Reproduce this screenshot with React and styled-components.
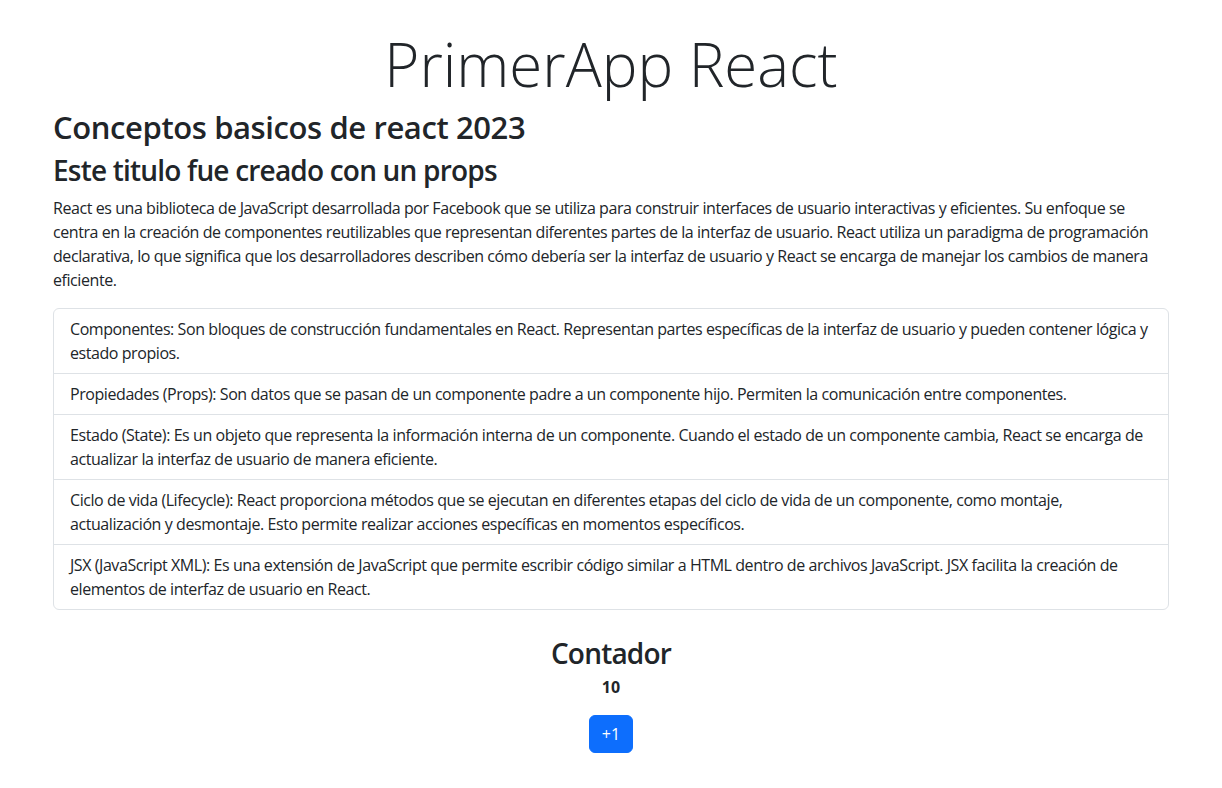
import React, { useState } from "react";
import styled, { createGlobalStyle } from "styled-components";

const GlobalStyle = createGlobalStyle`
  *, *::before, *::after { box-sizing: border-box; }
  body {
    margin: 0;
    background: #fff;
    color: #212529;
    font-family: "Open Sans", "Noto Sans", sans-serif;
    font-size: 16px;
    line-height: 1.5;
    letter-spacing: -0.43px;
  }
`;

const Container = styled.div`
  max-width: 1140px;
  margin: 0 auto;
  padding: 0 12px;
`;

const Display = styled.h1`
  margin: 28px 0 9px;
  text-align: center;
  font-size: 60px;
  font-weight: 300;
  line-height: 1.2;
  letter-spacing: 0;
`;

const Heading = styled.h2`
  margin: 0 0 ${(p) => (p.$tight ? 5 : 8)}px;
  font-size: ${(p) => p.$size}px;
  font-weight: 600;
  line-height: ${(p) => p.$size * 1.2}px;
  letter-spacing: ${(p) => p.$ls}px;
  text-align: ${(p) => (p.$center ? "center" : "left")};
`;

const Text = styled.p`
  margin: 0 0 16px;
`;

const ListGroup = styled.ul`
  margin: 0;
  padding: 0;
  list-style: none;
  border: 1px solid #dee2e6;
  border-radius: 6px;
`;

const ListItem = styled.li`
  padding: 8px 16px;
  & + & {
    border-top: 1px solid #dee2e6;
  }
`;

const Counter = styled.section`
  margin-top: 27px;
  text-align: center;
`;

const Count = styled.p`
  margin: 0 0 16px;
  font-weight: 700;
  letter-spacing: 0;
`;

const Button = styled.button`
  font-family: inherit;
  font-size: 16px;
  line-height: 24px;
  letter-spacing: 0;
  padding: 6px 12px;
  color: #fff;
  background: #0d6efd;
  border: 1px solid #0d6efd;
  border-radius: 6px;
  cursor: pointer;
`;

const conceptos = [
  "Componentes: Son bloques de construcción fundamentales en React. Representan partes específicas de la interfaz de usuario y pueden contener lógica y estado propios.",
  "Propiedades (Props): Son datos que se pasan de un componente padre a un componente hijo. Permiten la comunicación entre componentes.",
  "Estado (State): Es un objeto que representa la información interna de un componente. Cuando el estado de un componente cambia, React se encarga de actualizar la interfaz de usuario de manera eficiente.",
  "Ciclo de vida (Lifecycle): React proporciona métodos que se ejecutan en diferentes etapas del ciclo de vida de un componente, como montaje, actualización y desmontaje. Esto permite realizar acciones específicas en momentos específicos.",
  "JSX (JavaScript XML): Es una extensión de JavaScript que permite escribir código similar a HTML dentro de archivos JavaScript. JSX facilita la creación de elementos de interfaz de usuario en React.",
];

function Contador() {
  const [count, setCount] = useState(10);
  return (
    <Counter>
      <Heading $size={28} $ls={-0.8} $center $tight>
        Contador
      </Heading>
      <Count>{count}</Count>
      <Button onClick={() => setCount(count + 1)}>+1</Button>
    </Counter>
  );
}

export default function App() {
  return (
    <>
      <GlobalStyle />
      <Container>
        <Display>PrimerApp React</Display>
        <Heading $size={31} $ls={-0.4}>Conceptos basicos de react 2023</Heading>
        <Heading $size={28} $ls={-0.8}>Este titulo fue creado con un props</Heading>
        <Text>
          React es una biblioteca de JavaScript desarrollada por Facebook que se utiliza para
          construir interfaces de usuario interactivas y eficientes. Su enfoque se centra en la
          creación de componentes reutilizables que representan diferentes partes de la interfaz de
          usuario. React utiliza un paradigma de programación declarativa, lo que significa que los
          desarrolladores describen cómo debería ser la interfaz de usuario y React se encarga de
          manejar los cambios de manera eficiente.
        </Text>
        <ListGroup>
          {conceptos.map((c) => (
            <ListItem key={c}>{c}</ListItem>
          ))}
        </ListGroup>
        <Contador />
      </Container>
    </>
  );
}
